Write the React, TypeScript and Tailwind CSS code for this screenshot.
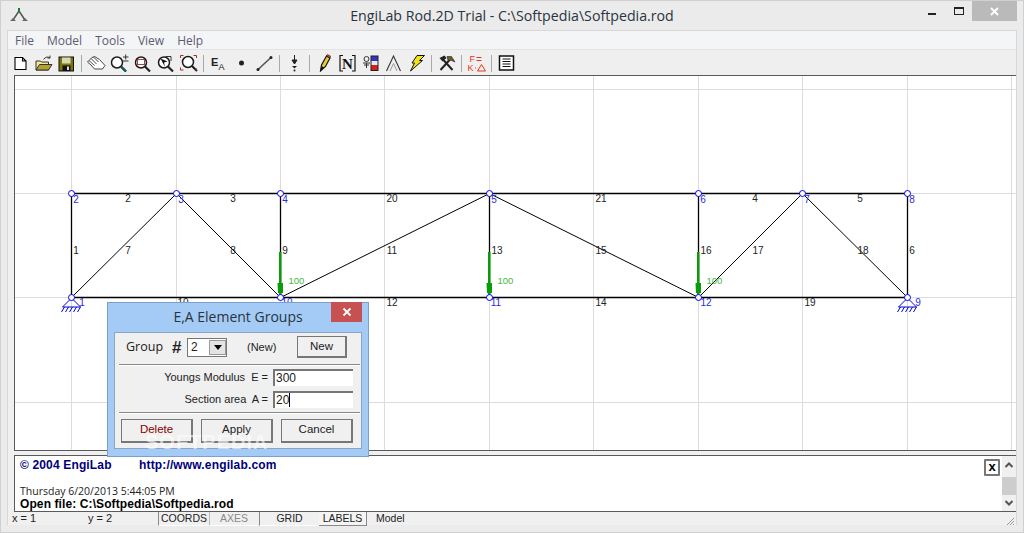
const els: [string, number, number][] = [
  ["1", 76, 250], ["2", 128, 198], ["3", 233, 198], ["20", 392, 198], ["21", 601, 198], ["4", 755, 198], ["5", 860, 198], ["6", 912, 250],
  ["7", 128, 250], ["8", 233, 250], ["9", 285, 250], ["11", 392, 250], ["13", 497, 250], ["15", 601, 250], ["16", 706, 250], ["17", 758, 250], ["18", 863, 250],
  ["10", 183, 302], ["12", 392, 302], ["14", 601, 302], ["19", 810, 302],
];
const nodes: [string, number, number, number, number][] = [
  ["1", 71, 297, 82, 302], ["2", 71, 193, 76, 199], ["3", 176, 193, 181, 199], ["4", 280, 193, 285, 199], ["5", 489, 193, 494, 199],
  ["6", 698, 193, 703, 199], ["7", 802, 193, 807, 199], ["8", 907, 193, 912, 199], ["9", 907, 297, 918, 302], ["10", 280, 297, 287, 302],
  ["11", 489, 297, 496, 302], ["12", 698, 297, 706, 302],
];
const vgrid = [71, 176, 280, 384, 489, 593, 698, 802, 907, 1011];
const hgrid = [89, 193, 297, 402];
const lines: [number, number, number, number, number][] = [
  [71, 193, 907, 193, 1.3], [71, 297, 907, 297, 1.3], [71, 193, 71, 297, 1.3], [280, 193, 280, 297, 1.3], [489, 193, 489, 297, 1.3], [698, 193, 698, 297, 1.3], [907, 193, 907, 297, 1.3],
  [71, 297, 176, 193, 1], [176, 193, 280, 297, 1], [280, 297, 489, 193, 1], [489, 193, 698, 297, 1], [698, 297, 802, 193, 1], [802, 193, 907, 297, 1],
];

function Support({ x, y }: { x: number; y: number }) {
  return (
    <g stroke="#0000e0" strokeWidth="1" fill="none">
      <path d={`M${x} ${y} L${x - 9} ${y + 9} H${x + 9} Z`} />
      {[-7, -3, 1, 5, 9].map((d) => (
        <path key={d} d={`M${x + d} ${y + 9} l-3 5`} />
      ))}
    </g>
  );
}

function Arrow({ x }: { x: number }) {
  return (
    <g>
      <rect x={x - 1.5} y={252} width="2.500" height="43" fill="#0a9a0a" />
      <path d={`M${x - 3} 283 H${x + 2.500} V293 H${x - 2.500} Z`} fill="#0a9a0a" />
      <text x={x + 8} y={284} fontSize="9.500" fill="#45b845" fontFamily="Liberation Sans">100</text>
    </g>
  );
}

function Sep() {
  return <div className="w-px h-[17px] bg-[#a9a9a9] mx-[3px] shrink-0" />;
}

function Ic({ children }: { children: React.ReactNode }) {
  return (
    <svg width="23" height="18" viewBox="-1.5 0 23 18" className="shrink-0 block">
      {children}
    </svg>
  );
}

function Mag({ cx = 10, cy = 8 }: { cx?: number; cy?: number }) {
  return (
    <g fill="none">
      <circle cx={cx} cy={cy} r="5.500" stroke="#1a1a1a" strokeWidth="1.500" fill="#fff" />
      <path d={`M${cx + 4} ${cy + 4} l5 5`} stroke="#222" strokeWidth="2.200" />
    </g>
  );
}

function Toolbar() {
  return (
    <div className="h-[25px] bg-[#efefef] flex items-center pl-[1px] pt-[1px] shrink-0">
      <Ic>
        <path d="M4.500 3.500H12L15.500 7V15.500H4.500Z M12 3.500V7H15.500" fill="#fff" stroke="#000" strokeWidth="1.100" />
      </Ic>
      <Ic>
        <path d="M2.500 16V7H7L8 8H15V16Z" fill="#f5e79a" stroke="#333" />
        <path d="M2.500 16L6 10.500H18.500L15 16Z" fill="#b3a32d" stroke="#333" />
        <path d="M10 5.500Q13 1.500 16.500 4M16.500 4V1.500M16.500 4H14" stroke="#333" fill="none" />
      </Ic>
      <Ic>
        <rect x="2.500" y="3" width="14.500" height="14" fill="#7a7510" stroke="#111" />
        <rect x="5.500" y="3.500" width="8.500" height="6" fill="#d8d8b0" />
        <rect x="6" y="11.500" width="8" height="5.500" fill="#111" />
        <rect x="10.500" y="12.500" width="2" height="3.500" fill="#ddd" />
      </Ic>
      <Sep />
      <Ic>
        <path d="M1 8L4.500 11 8 15H16L18.500 11.500 13 5.500 8 2.500 5.500 3.500 3.500 5.500Z M4.500 4.500L10 10M7 3L12 8M2.500 6.500L8 11.500" fill="#fff" stroke="#333" strokeWidth="0.900" />
      </Ic>
      <Ic>
        <Mag cx={7.500} cy={8.500} />
        <path d="M13.500 3H19M16.200 0.500V5.500M13.500 7H19" stroke="#333" strokeWidth="1" />
        <path d="M11.500 12.500l5 5" stroke="#1a5a5a" strokeWidth="2.200" />
      </Ic>
      <Ic>
        <Mag cx={8.500} cy={8.500} />
        <rect x="5" y="5.500" width="7" height="5" fill="none" stroke="#a04040" strokeWidth="1" />
      </Ic>
      <Ic>
        <Mag cx={8.500} cy={8.500} />
        <path d="M5 4.500L12 7.500 8.500 8.500 9.500 13Z" fill="#111" />
        <path d="M10 2.500H15.500V7" stroke="#333" fill="none" />
      </Ic>
      <Ic>
        <Mag cx={9.500} cy={8} />
        <path d="M2 4V1.500H5M15 1.500H18V4M2 13.500V16H5M17.500 14V16.500" stroke="#a52a2a" fill="none" />
      </Ic>
      <Sep />
      <svg width="23" height="18" viewBox="0 0 23 18" className="shrink-0 block">
        <text x="4" y="12" fontSize="11" fontWeight="700" fontFamily="Liberation Sans" fill="#222">E</text>
        <text x="11.500" y="15.500" fontSize="9" fontFamily="Liberation Sans" fill="#222">A</text>
      </svg>
      <Ic>
        <circle cx="10" cy="9" r="2.500" fill="#222" />
      </Ic>
      <Ic>
        <path d="M3 16L17 3" stroke="#555" strokeWidth="1.600" />
        <circle cx="3.500" cy="15.500" r="1.500" fill="#222" />
        <circle cx="16.500" cy="3.500" r="1.500" fill="#222" />
      </Ic>
      <Sep />
      <Ic>
        <path d="M10 1V9M7.500 6L10 10 12.500 6Z" stroke="#222" fill="#222" />
        <path d="M7.500 12H12.500L10 14.500Z" fill="#222" />
        <circle cx="10" cy="16.500" r="1" fill="#222" />
      </Ic>
      <Sep />
      <Ic>
        <path d="M6 17L7 11 12 2 15.500 4 11 12.500Z" fill="#e6c840" stroke="#111" strokeWidth="1.200" />
        <path d="M12 2L13 0.500 16 2 15.500 4Z" fill="#c9482a" stroke="#111" strokeWidth="0.500" />
        <path d="M6 17L7 12 9.500 13.500Z" fill="#111" />
      </Ic>
      <svg width="23" height="18" viewBox="0 0 23 18" className="shrink-0 block">
        <path d="M7 1.500H4V17H7M16 1.500H19V17H16" fill="none" stroke="#111" strokeWidth="1.200" />
        <text x="11.500" y="14.500" fontSize="15" fontWeight="700" textAnchor="middle" fontFamily="Liberation Serif" fill="#111">N</text>
      </svg>
      <Ic>
        <rect x="10.500" y="2" width="7" height="5" fill="#3333c8" />
        <rect x="10.500" y="7" width="7" height="4" fill="#e8e8f4" />
        <rect x="10.500" y="11" width="7" height="5.500" fill="#d81f1f" />
        <rect x="10.500" y="2" width="7" height="14.500" fill="none" stroke="#222" />
        <circle cx="6" cy="5" r="2.500" fill="none" stroke="#333" />
        <path d="M2.500 9H9.500M6 9V14M3.500 11H8.500" stroke="#333" />
      </Ic>
      <Ic>
        <path d="M3 17L10 2 17 17" fill="none" stroke="#333" strokeWidth="1.100" />
        <path d="M6.500 17L10 9.500 13.500 17" fill="none" stroke="#999" strokeWidth="1" />
      </Ic>
      <Ic>
        <path d="M4 17L8 9H5.500L10.500 1.500H18L13 6.500H16Z" fill="#f2e21a" stroke="#111" strokeWidth="1" />
      </Ic>
      <Sep />
      <Ic>
        <path d="M4 16L13 6M16 16L7 6" stroke="#222" strokeWidth="2" />
        <path d="M3 4L8 1.500 10 4 6 7.500Z" fill="#222" />
        <path d="M10.500 2.500L15 2.500 18.500 8 15 6.500 11.500 6.500Z" fill="#6a5a24" stroke="#222" strokeWidth="0.600" />
      </Ic>
      <Sep />
      <svg width="23" height="18" viewBox="-1.5 0 23 18" className="shrink-0 block">
        <text x="3" y="8" fontSize="9" fontFamily="Liberation Sans" fill="#e8341c">F</text>
        <path d="M10 3.500H15M10 6.500H15" stroke="#e8341c" />
        <text x="1" y="17" fontSize="9" fontFamily="Liberation Sans" fill="#e8341c">K</text>
        <path d="M8.500 14h1" stroke="#e8341c" />
        <path d="M11 17L15 10.500 19 17Z" fill="none" stroke="#e8341c" />
      </svg>
      <Sep />
      <Ic>
        <rect x="3" y="2" width="14" height="14" fill="#fff" stroke="#111" strokeWidth="1.500" />
        <path d="M6 5H14M6 7.500H14M6 10H14M6 12.500H14" stroke="#111" />
      </Ic>
    </div>
  );
}

function Canvas() {
  return (
    <div className="relative h-[376px] shrink-0 bg-white border-t border-l border-b border-[#5a5a5a] overflow-hidden">
      <svg width="1002" height="376" viewBox="14 75 1002 376" className="absolute left-[-1px] top-[-1px]">
        {vgrid.map((x) => (
          <path key={x} d={`M${x + 0.5} 75V451`} stroke="#dcdcdc" />
        ))}
        {hgrid.map((y) => (
          <path key={y} d={`M14 ${y + 0.5}H1016`} stroke="#dcdcdc" />
        ))}
        {lines.map((l, i) => (
          <line key={i} x1={l[0] + 0.5} y1={l[1] + 0.5} x2={l[2] + 0.5} y2={l[3] + 0.5} stroke="#000" strokeWidth={l[4]} />
        ))}
        <Support x={71.500} y={298} />
        <Support x={907.500} y={298} />
        <Arrow x={280.500} />
        <Arrow x={489.500} />
        <Arrow x={698.500} />
        {nodes.map(([, x, y]) => (
          <circle key={`${x}-${y}`} cx={x + 0.5} cy={y + 0.5} r="3" fill="#fff" stroke="#0000f0" />
        ))}
        {els.map(([t, x, y]) => (
          <text key={`e${t}`} x={x} y={y + 3.5} fontSize="10" textAnchor="middle" fill="#222" fontFamily="Liberation Sans">{t}</text>
        ))}
        {nodes.map(([t, , , x, y]) => (
          <text key={`n${t}`} x={x} y={y + 3.5} fontSize="10" textAnchor="middle" fill="#2a2ae0" fontFamily="Liberation Sans">{t}</text>
        ))}
      </svg>
    </div>
  );
}

function Btn({ children, red }: { children: React.ReactNode; red?: boolean }) {
  return (
    <button className={`w-[72px] h-[24px] bg-[#f0f0f0] border border-[#777] border-b-2 border-r-2 text-[11.500px] leading-none ${red ? "text-[#8b0000]" : "text-[#222]"}`}>
      {children}
    </button>
  );
}

function Dialog() {
  return (
    <div className="absolute left-[106px] top-[301px] w-[262px] h-[155px] bg-[#a3cbf5] border border-[#7f9fc4] flex flex-col px-[6px] pb-[7px] font-['Liberation_Sans',sans-serif] text-[#222]">
      <div className="relative h-[29px] shrink-0 flex items-center justify-center font-['Open_Sans',sans-serif] text-[14px] text-[#2a3340] pb-[3px]">
        E,A Element Groups
        <div className="absolute right-0 top-[-1px] w-[31px] h-[20px] bg-[#c75050] flex items-center justify-center">
          <svg width="10" height="10" viewBox="0 0 10 10">
            <path d="M1.500 1.500L8.500 8.500M8.500 1.500L1.500 8.500" stroke="#fff" strokeWidth="1.800" />
          </svg>
        </div>
      </div>
      <div className="flex-1 bg-[#f0f0f0] border border-[#8aa4c4] flex flex-col pl-[4px] pr-[1px] text-[11px]">
        <div className="h-[31px] flex items-center shrink-0 pb-[3px]">
          <span className="ml-[7px] font-['Open_Sans',sans-serif] text-[12.500px] w-[46px]">Group</span>
          <span className="text-[17px] font-bold w-[15px] leading-none">#</span>
          <div className="w-[40px] h-[19px] bg-white border border-[#777] flex items-center pl-[3px] justify-between text-[12px]">
            <span>2</span>
            <span className="w-[17px] h-[15px] bg-[#e4e4e4] border border-[#999] flex items-center justify-center">
              <svg width="8" height="5" viewBox="0 0 8 5"><path d="M0 0H8L4 5Z" fill="#000" /></svg>
            </span>
          </div>
          <span className="ml-[20px] w-[50px]">(New)</span>
          <button className="w-[50px] h-[22px] bg-[#f0f0f0] border border-[#777] border-b-2 border-r-2 text-[11.500px] leading-none">New</button>
        </div>
        <div className="h-[2px] bg-[#8a8a8a] border-b border-white shrink-0" />
        <div className="flex items-center justify-end h-[17px] mt-[3px] pr-[7px]">
          <span className="mr-[5px]">Youngs Modulus&nbsp; E =</span>
          <div className="w-[80px] h-[17px] bg-white border-t-2 border-l-2 border-[#777] leading-[14px] pl-[1px] text-[12px]">300</div>
        </div>
        <div className="flex items-center justify-end h-[17px] mt-[5px] pr-[7px]">
          <span className="mr-[5px]">Section area&nbsp; A =</span>
          <div className="w-[80px] h-[17px] bg-white border-t-2 border-l-2 border-[#777] leading-[14px] pl-[1px] flex text-[12px]">20<span className="w-px h-[14px] bg-black" /></div>
        </div>
        <div className="h-[2px] bg-[#8a8a8a] border-b border-white shrink-0 mt-[4px]" />
        <div className="flex items-center flex-1 pl-[2px] gap-[8px] pb-[1px]">
          <Btn red>Delete</Btn>
          <Btn>Apply</Btn>
          <Btn>Cancel</Btn>
        </div>
      </div>
      <span className="absolute left-[37px] top-[124px] text-[20px] font-bold tracking-[1px] text-white/60 pointer-events-none">SOFTPEDIA</span>
    </div>
  );
}

function Messages() {
  return (
    <div className="relative h-[57px] shrink-0 bg-white border-t border-l border-b border-[#5a5a5a] text-black flex">
      <div className="flex-1 pl-[5px] pt-[2px]">
        <div className="flex font-['Liberation_Sans',sans-serif] font-bold text-[12px] leading-[14px] text-[#00007a] tracking-[0.150px]">
          <span className="w-[119px]">© 2004 EngiLab</span>
          <span>http://www.engilab.com</span>
        </div>
        <div className="font-['Open_Sans',sans-serif] text-[10.500px] text-[#222] mt-[13px] leading-[13px]">Thursday 6/20/2013 5:44:05 PM</div>
        <div className="font-bold font-['Liberation_Sans',sans-serif] text-[12px] tracking-[0.100px] leading-[13px]">Open file: C:\Softpedia\Softpedia.rod</div>
      </div>
      <div className="w-[16px] h-[17px] mt-[3px] mr-[2px] border-2 border-[#777] rounded-[1px] flex items-center justify-center font-['Liberation_Sans',sans-serif] font-bold text-[13px] leading-none pb-[2px]">x</div>
      <div className="w-[14px] bg-[#f0f0f0] flex flex-col items-center">
        <svg width="14" height="21" viewBox="0 0 14 21"><path d="M3.500 11L7 7.500 10.500 11" fill="none" stroke="#555" strokeWidth="2" /></svg>
        <div className="w-[14px] h-[18px] bg-[#cdcdcd]" />
        <svg width="14" height="16" viewBox="0 0 14 16"><path d="M3.500 6L7 9.500 10.500 6" fill="none" stroke="#555" strokeWidth="2" /></svg>
      </div>
    </div>
  );
}

function StatusBar() {
  return (
    <div className="relative h-[14px] shrink-0 flex items-start text-[10.500px] leading-[12px] text-[#222] font-['Liberation_Sans',sans-serif]">
      <span className="ml-[-2px] w-[76px] text-[11px]">x = 1</span>
      <span className="w-[70px] text-[11px]">y = 2</span>
      <div className="w-[51px] h-[14px] border-l border-b border-l-[#888] border-b-white text-center">COORDS</div>
      <div className="w-[49px] h-[14px] border-l border-b border-l-[#bbb] border-b-white text-center text-[#888]">AXES</div>
      <div className="w-[60px] h-[14px] ml-[1px] border-l border-b border-l-[#888] border-b-white text-center">GRID</div>
      <div className="w-[48px] h-[14px] border-r border-b border-[#888] bg-[#f4f4f4] text-center">LABELS</div>
      <span className="ml-[9px]">Model</span>
      <svg width="10" height="10" viewBox="0 0 10 10" className="absolute right-[1px] bottom-0">
        <path d="M9 2L2 9M9 5L5 9M9 8L8 9" stroke="#999" />
      </svg>
    </div>
  );
}

export default function App() {
  return (
    <div className="relative w-[1024px] h-[533px] bg-[#ebebeb] border border-[#d0d0d0] overflow-hidden">
      <div className="relative h-[29px] flex items-center justify-center font-['Open_Sans',sans-serif] text-[14.200px] text-[#2a3340]">
        <svg width="18" height="16" viewBox="0 0 18 16" className="absolute left-[9px] top-[7px]">
          <path d="M9 3L3 12M9 3L15 12" stroke="#555" strokeWidth="1.500" fill="none" />
          <path d="M9 0V4" stroke="#1a7a3a" strokeWidth="2" />
          <path d="M0 13L3 10 6 13Z M12 13L15 10 18 13Z" fill="#666" />
        </svg>
        EngiLab Rod.2D Trial - C:\Softpedia\Softpedia.rod
        <div className="absolute right-[6px] top-0 h-[20px] flex items-stretch">
          <div className="w-[27px] relative"><span className="absolute left-[20px] top-[12px] w-[8px] h-[2px] bg-[#222]" /></div>
          <div className="w-[37px] relative"><span className="absolute left-[19px] top-[6px] w-[10px] h-[8px] border border-t-2 border-[#222]" /></div>
          <div className="w-[45px] bg-[#bababa] flex items-center justify-center">
            <svg width="9" height="9" viewBox="0 0 9 9"><path d="M1 1L8 8M8 1L1 8" stroke="#fff" strokeWidth="1.800" /></svg>
          </div>
        </div>
      </div>
      <div className="mx-[6px] border border-[#d8d8d8] border-b-0 h-[495px] flex flex-col bg-[#f0f0f0]">
        <div className="h-[19px] shrink-0 bg-[#f4f5f7] border-b border-[#e3e3e3] flex items-center pl-[7px] pt-[1px] gap-[13px] font-['Open_Sans',sans-serif] text-[12px] text-[#5c5c70]">
          <span>File</span><span>Model</span><span>Tools</span><span>View</span><span>Help</span>
        </div>
        <Toolbar />
        <div className="ml-[6px] flex flex-col">
          <Canvas />
          <div className="h-[4px] shrink-0 bg-[#f0f0f0]" />
          <Messages />
          <StatusBar />
        </div>
      </div>
      <Dialog />
    </div>
  );
}
